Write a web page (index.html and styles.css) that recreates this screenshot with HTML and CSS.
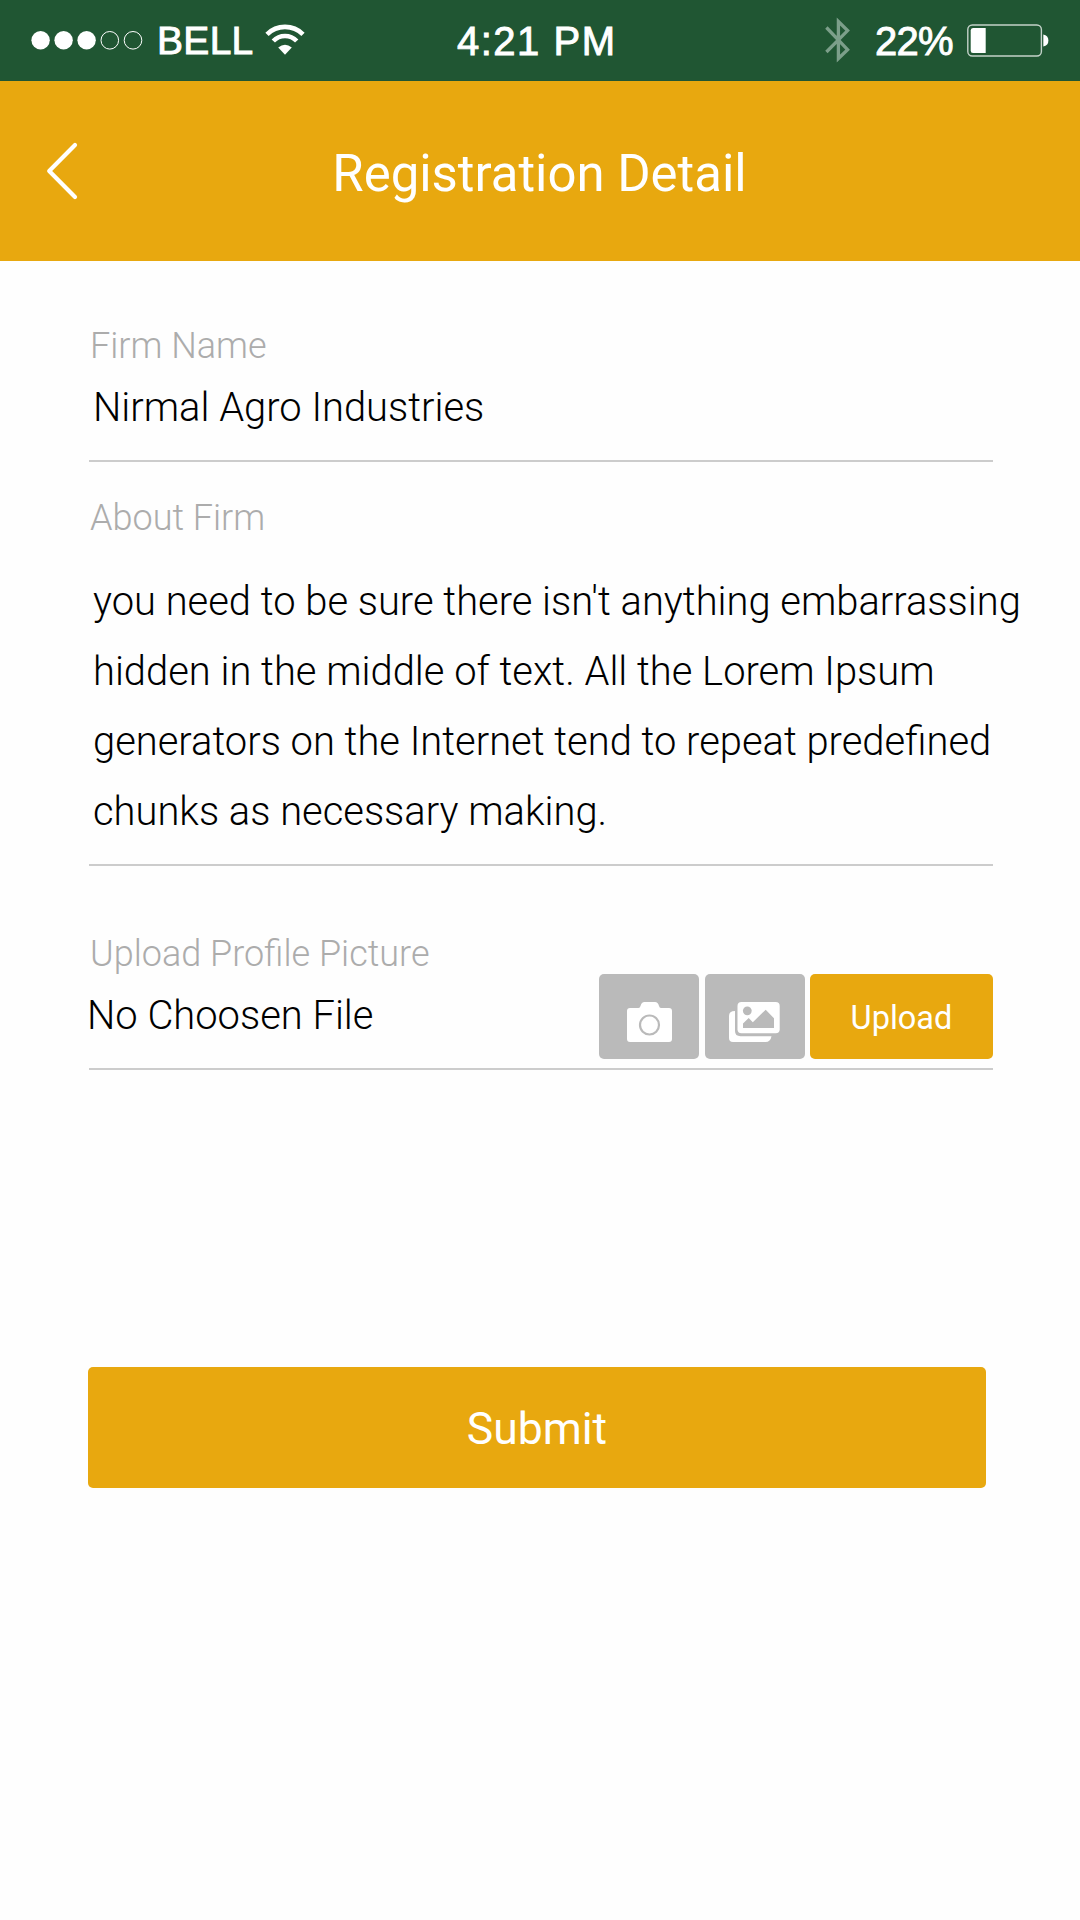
FILE: index.html
```html
<!DOCTYPE html>
<html lang="en">
<head>
<meta charset="utf-8">
<title>Registration Detail</title>
<link rel="stylesheet" href="styles.css">
</head>
<body>
<div class="statusbar">
  <svg class="signal" width="112" height="20" viewBox="0 0 112 20" fill="#fff">
    <circle cx="9.6" cy="10.3" r="9.2"/><circle cx="32.6" cy="10.3" r="9.2"/><circle cx="55.6" cy="10.3" r="9.2"/>
    <g fill="none" stroke="#fff" stroke-width="1"><circle cx="78.8" cy="10.3" r="8.8"/><circle cx="102" cy="10.3" r="8.8"/></g>
  </svg>
  <span class="carrier">BELL</span>
  <svg class="wifi" width="40" height="32" viewBox="0 0 40 32">
    <g fill="none" stroke="#fff" stroke-width="4.6">
      <path d="M2 10.3A25.5 25.5 0 0 1 38 10.3"/>
      <path d="M8.3 17A16.2 16.2 0 0 1 31.7 17"/>
    </g>
    <path d="M13.2 23.6Q20 18 26.8 23.6L20 30.8Z" fill="#fff"/>
  </svg>
  <span class="clock">4:21 PM</span>
  <svg class="bluetooth" width="26" height="46" viewBox="0 0 26 46" fill="none" stroke="#7c9f8a" stroke-width="3.3">
    <path d="M1.4 10.5L22.6 32.6L13.4 41.5V4.5L22.6 13.6L1.4 35"/>
  </svg>
  <span class="percent">22%</span>
  <svg class="battery" width="82" height="34" viewBox="0 0 82 34">
    <rect x="0.8" y="1" width="73.6" height="31" rx="4.5" fill="none" stroke="#c3d2c9" stroke-width="1.4"/>
    <path d="M6 4H18.7V29H6Q3.7 29 3.7 26.5V6.5Q3.7 4 6 4Z" fill="#fff"/>
    <path d="M76.3 10.5Q81.4 11.5 81.4 16.5Q81.4 21.5 76.3 22.5Z" fill="#fff"/>
  </svg>
</div>
<header class="appbar">
  <svg class="back" width="34" height="60" viewBox="0 0 34 60" fill="none" stroke="#fff" stroke-width="4.2" stroke-linecap="round" stroke-linejoin="round">
    <path d="M29 4L3.2 30L29 56"/>
  </svg>
  <h1 class="title">Registration Detail</h1>
</header>
<main class="form">
  <section class="field firm">
    <div class="label">Firm Name</div>
    <div class="value">Nirmal Agro Industries</div>
  </section>
  <section class="field about">
    <div class="label">About Firm</div>
    <p class="text">you need to be sure there isn't anything embarrassing<br>hidden in the middle of text. All the Lorem Ipsum<br>generators on the Internet tend to repeat predefined<br>chunks as necessary making.</p>
  </section>
  <section class="field upload">
    <div class="file">
      <div class="label">Upload Profile Picture</div>
      <div class="value filename">No Choosen File</div>
    </div>
    <div class="actions">
      <button class="tool" aria-label="Camera">
        <svg width="100" height="85" viewBox="0 0 100 85">
          <path d="M31 34H39.5Q41 34 41.5 32Q42.5 28 45.5 28H56Q59 28 60 32Q60.5 34 62 34H70Q73 34 73 37V65Q73 68 70 68H31Q28 68 28 65V37Q28 34 31 34Z" fill="#fff"/>
          <circle cx="50.5" cy="51" r="9.5" fill="none" stroke="#bababa" stroke-width="2.2"/>
        </svg>
      </button>
      <button class="tool" aria-label="Gallery">
        <svg width="100" height="85" viewBox="0 0 100 85">
          <path d="M30 37Q24 37 24 42V64Q24 68 28 68H60.5Q65.5 68 66.5 62.2H35.5Q30 62.2 30 57Z" fill="#fff"/>
          <rect x="32.5" y="28" width="42.2" height="31.3" rx="4" fill="#fff"/>
          <g fill="#bababa"><circle cx="42.3" cy="36.8" r="4.4"/><path d="M38 54V49.5L43.7 44L47.8 48.2L60.7 35.7L69 44.3V54Z"/></g>
        </svg>
      </button>
      <button class="send">Upload</button>
    </div>
  </section>
  <button class="submit">Submit</button>
</main>
</body>
</html>
```
FILE: styles.css
```css
* { box-sizing: border-box; }
body {
  margin: 0;
  width: 1080px;
  height: 1920px;
  overflow: hidden;
  background: #fefefe;
  color: #000;
  font-family: Roboto, sans-serif;
}
svg { display: block; flex: none; }
button { border: 0; padding: 0; font-family: inherit; color: #fff; }

.statusbar {
  display: flex;
  height: 81px;
  padding-left: 31px;
  background: #205633;
  color: #fff;
  font-family: "Liberation Sans", Arial, sans-serif;
  font-size: 40px;
  line-height: 82px;
  white-space: nowrap;
  -webkit-text-stroke: 0.9px #fff;
}
.signal { margin-top: 30px; }
.carrier { width: 108px; margin-left: 14px; font-size: 39px; letter-spacing: 0.3px; }
.wifi { margin: 24px 0 0 0; }
.clock { width: 250px; margin-left: 152px; letter-spacing: 1.5px; }
.bluetooth { margin: 17px 0 0 118px; }
.percent { width: 92px; margin-left: 24px; letter-spacing: -0.7px; }
.battery { margin-top: 24px; }

.appbar {
  display: grid;
  grid-template-columns: 80px 920px 80px;
  align-items: center;
  height: 180px;
  background: #e8a80f;
}
.back { margin-left: 46px; }
.title {
  margin: 0;
  padding: 6px 1px 0 0;
  color: #fff;
  font-size: 50.9px;
  font-weight: 400;
  line-height: 60px;
  text-align: center;
}

.form { padding: 59px 87px 0 89px; }
.field { border-bottom: 2px solid #ccc; white-space: nowrap; }
.label { padding-left: 1px; color: #acacac; font-size: 36px; font-weight: 300; line-height: 52px; }
.value { padding-top: 6px; font-size: 39.9px; font-weight: 300; line-height: 60px; }
.firm { height: 142px; }
.about { height: 404px; padding-top: 30px; }
.firm .value, .about .text { padding-left: 4px; }
.text { margin: 23px 0 0; font-size: 39.9px; font-weight: 300; line-height: 70px; }
.upload {
  display: flex;
  justify-content: space-between;
  height: 204px;
  padding-top: 62px;
}
.filename { margin-left: -2px; }
.actions { display: flex; margin-top: 46px; }
.tool { width: 100px; height: 85px; margin-right: 6px; border-radius: 5px; background: #bababa; }
.send { width: 183px; height: 85px; margin-left: -1px; padding-top: 2px; border-radius: 5px; background: #e8a80f; font-size: 32.5px; }
.submit {
  display: block;
  width: 898px;
  height: 121px;
  margin: 297px 0 0 -1px;
  padding-top: 3px;
  border-radius: 5px;
  background: #e8a80f;
  font-size: 44.5px;
}
```
